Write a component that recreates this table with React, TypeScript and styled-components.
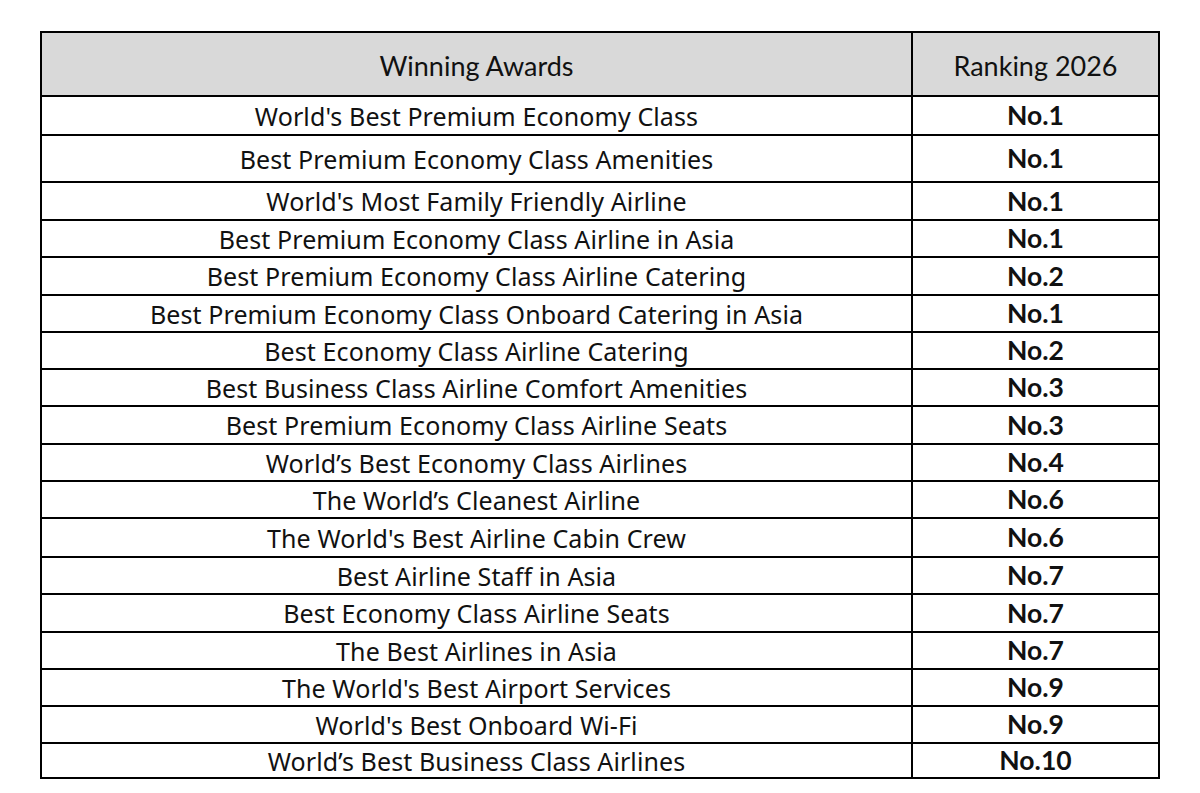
import * as React from 'react'
import styled, { createGlobalStyle } from 'styled-components'

const awards: { name: string; rank: string; h: number }[] = [
	{ name: "World's Best Premium Economy Class", rank: 'No.1', h: 39 },
	{ name: 'Best Premium Economy Class Amenities', rank: 'No.1', h: 47 },
	{ name: "World's Most Family Friendly Airline", rank: 'No.1', h: 38 },
	{ name: 'Best Premium Economy Class Airline in Asia', rank: 'No.1', h: 37 },
	{ name: 'Best Premium Economy Class Airline Catering', rank: 'No.2', h: 38 },
	{ name: 'Best Premium Economy Class Onboard Catering in Asia', rank: 'No.1', h: 37 },
	{ name: 'Best Economy Class Airline Catering', rank: 'No.2', h: 37 },
	{ name: 'Best Business Class Airline Comfort Amenities', rank: 'No.3', h: 37 },
	{ name: 'Best Premium Economy Class Airline Seats', rank: 'No.3', h: 38 },
	{ name: 'World\u2019s Best Economy Class Airlines', rank: 'No.4', h: 37 },
	{ name: 'The World\u2019s Cleanest Airline', rank: 'No.6', h: 37 },
	{ name: "The World's Best Airline Cabin Crew", rank: 'No.6', h: 39 },
	{ name: 'Best Airline Staff in Asia', rank: 'No.7', h: 37 },
	{ name: 'Best Economy Class Airline Seats', rank: 'No.7', h: 38 },
	{ name: 'The Best Airlines in Asia', rank: 'No.7', h: 37 },
	{ name: "The World's Best Airport Services", rank: 'No.9', h: 37 },
	{ name: "World's Best Onboard Wi-Fi", rank: 'No.9', h: 37 },
	{ name: 'World\u2019s Best Business Class Airlines', rank: 'No.10', h: 35 },
]

export default function App(): JSX.Element {
	return (
		<>
			<GlobalStyle />
			<Page>
				<Table>
					<colgroup>
						<col style={{ width: 871 }} />
						<col style={{ width: 247 }} />
					</colgroup>
					<thead>
						<HeadRow>
							<HeadCell>Winning Awards</HeadCell>
							<HeadCell>Ranking 2026</HeadCell>
						</HeadRow>
					</thead>
					<tbody>
						{awards.map((a) => (
							<tr key={a.name} style={{ height: a.h }}>
								<NameCell>{a.name}</NameCell>
								<RankCell>{a.rank}</RankCell>
							</tr>
						))}
					</tbody>
				</Table>
			</Page>
		</>
	)
}

const GlobalStyle = createGlobalStyle`
	html, body {
		margin: 0;
		padding: 0;
		background: #ffffff;
	}
`

const Page = styled.div`
	padding: 31px 0 0 40px;
`

const Table = styled.table`
	width: 1117px;
	border-collapse: collapse;
	table-layout: fixed;
	color: #111111;

	td,
	th {
		border: 2px solid #000000;
		padding: 0;
		text-align: center;
		vertical-align: middle;
		line-height: 1;
		white-space: nowrap;
	}
`

const HeadRow = styled.tr`
	height: 64px;
	background-color: #d9d9d9;
`

const HeadCell = styled.th`
	font-family: Lato, 'Open Sans', sans-serif;
	font-weight: 400;
	font-size: 27px;
	padding-top: 2px !important;
`

const NameCell = styled.td`
	font-family: 'Noto Sans', 'Open Sans', sans-serif;
	font-weight: 400;
	font-size: 25px;
	letter-spacing: 0.1px;
	padding-top: 1px !important;
`

const RankCell = styled.td`
	font-family: Lato, 'Open Sans', sans-serif;
	font-weight: 700;
	font-size: 26.5px;
`
